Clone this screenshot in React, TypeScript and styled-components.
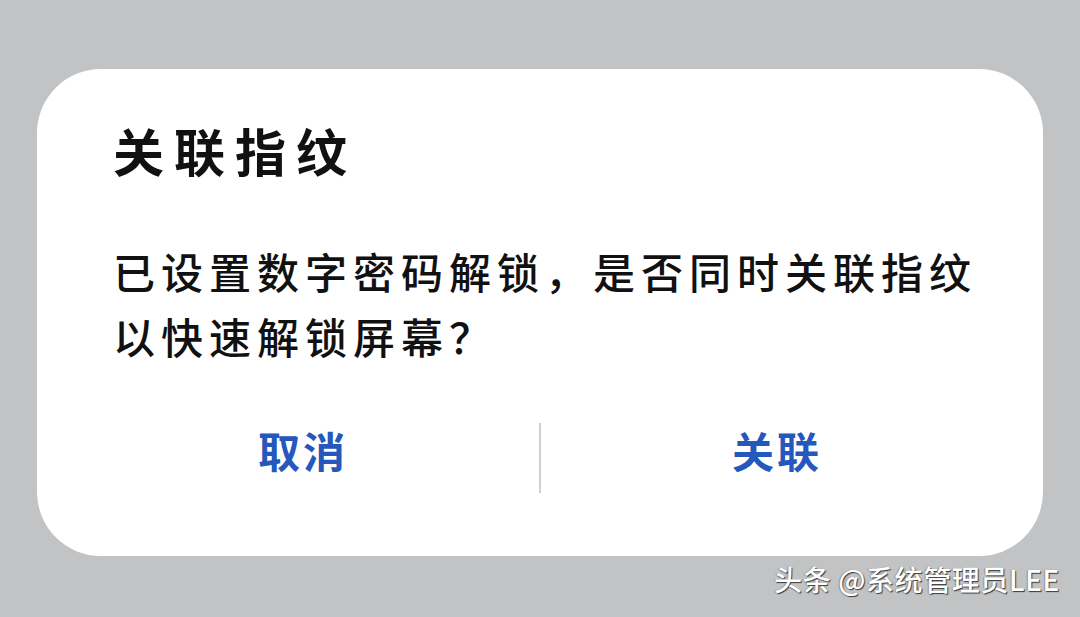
import React from 'react';
import styled, {createGlobalStyle} from "styled-components";

const GlobalStyle = createGlobalStyle`
    html, body {
        margin: 0;
        padding: 0;
        background: #c2c3c5;
    }
    body {
        font-family: "Noto Sans CJK SC", "Noto Sans", sans-serif;
    }
`

type ButtonProps = {
    label: string
    onClick?: () => void
}

const DialogButton = ({label, onClick}: ButtonProps) => {
    return (
        <ActionButton type="button" onClick={onClick}>{label}</ActionButton>
    )
}

export default function App() {
    return (
        <Screen>
            <GlobalStyle/>
            <Card>
                <Title>关联指纹</Title>
                <Message>
                    已设置数字密码解锁，是否同时关联指纹<br/>
                    以快速解锁屏幕？
                </Message>
                <Actions>
                    <DialogButton label="取消"/>
                    <Divider/>
                    <DialogButton label="关联"/>
                </Actions>
            </Card>
            <Watermark>头条 @系统管理员LEE</Watermark>
        </Screen>
    );
};

const Screen = styled.div`
    width: 1080px;
    height: 617px;
    box-sizing: border-box;
    padding-top: 69px;
    display: flex;
    flex-direction: column;
    overflow: hidden;
`

const Card = styled.div`
    margin-left: 37px;
    width: 1006px;
    height: 487px;
    box-sizing: border-box;
    background: #ffffff;
    border-radius: 64px;
    padding: 51px 30px 0 76px;
    display: flex;
    flex-direction: column;
`

const Title = styled.div`
    font-size: 51px;
    line-height: 60px;
    font-weight: 700;
    letter-spacing: 10px;
    color: #111111;
`

const Message = styled.div`
    margin-top: 58px;
    font-size: 42px;
    line-height: 65px;
    font-weight: 500;
    letter-spacing: 6px;
    color: #111111;
    white-space: nowrap;
`

const Actions = styled.div`
    margin-top: 52px;
    margin-left: -46px;
    display: grid;
    grid-template-columns: 1fr 2px 1fr;
    align-items: center;
    height: 70px;
`

const ActionButton = styled.button`
    border: none;
    background: transparent;
    padding: 0 0 16px;
    font-family: "Noto Sans CJK SC", "Noto Sans", sans-serif;
    font-size: 42px;
    font-weight: 700;
    letter-spacing: 3px;
    line-height: 60px;
    color: #2458bd;
    text-align: center;
    cursor: pointer;
`

const Divider = styled.div`
    width: 2px;
    height: 70px;
    background: #cfcfcf;
`

const Watermark = styled.div`
    margin-top: 8px;
    align-self: flex-end;
    margin-right: 20px;
    font-size: 28px;
    line-height: 30px;
    font-weight: 500;
    letter-spacing: 0.6px;
    color: #ffffff;
    text-shadow: 1px 1px 1px #3a3a3a, -1px 0 1px rgba(0, 0, 0, 0.25);
`
